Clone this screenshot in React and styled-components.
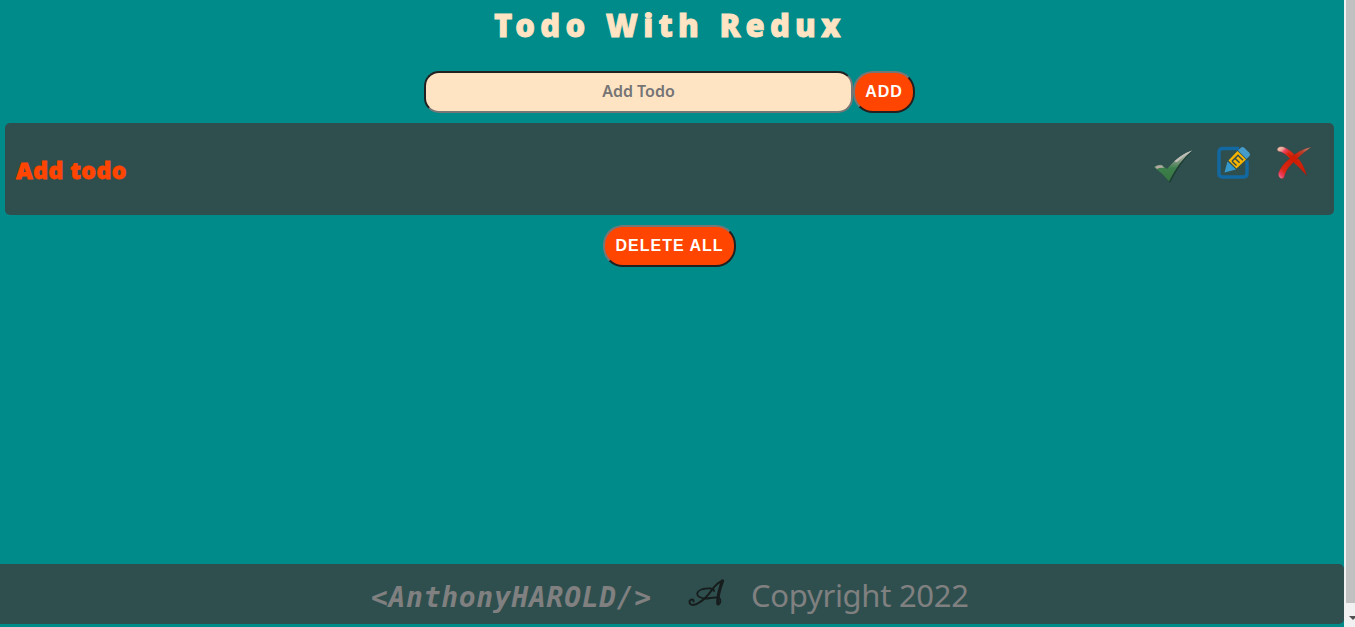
import React from 'react';
import styled, { createGlobalStyle } from 'styled-components';

const Global = createGlobalStyle`
  * { box-sizing: border-box; }
  html, body { margin: 0; height: 627px; overflow: hidden; background: #008b8b; }
`;

const Shell = styled.div`
  display: flex;
  width: 1355px;
  height: 627px;
  background: #008b8b;
  font-family: 'Noto Sans', 'Open Sans', sans-serif;
`;

const Page = styled.div`
  width: 1344px;
  height: 627px;
  display: flex;
  flex-direction: column;
  padding-bottom: 3px;
`;

const Title = styled.h1`
  margin: 0;
  height: 71px;
  padding: 3px 0 0 494px;
  color: #ffe4c4;
  font-size: 31px;
  line-height: 44px;
  font-weight: 900;
  letter-spacing: 5.2px;
  word-spacing: 2.2px;
  -webkit-text-stroke: 0.8px #ffe4c4;
  white-space: nowrap;
`;

const Form = styled.form`
  display: flex;
  height: 42px;
  margin-left: 424px;
`;

const TodoInput = styled.input`
  width: 429px;
  height: 42px;
  padding: 0 0 3px;
  border: 2px solid;
  border-color: #212121 #767676 #767676 #212121;
  border-radius: 15px;
  background: #ffe4c4;
  text-align: center;
  font: 600 16px 'Noto Sans', sans-serif;
  outline: none;
  &::placeholder { color: #757575; opacity: 1; }
`;

const PillButton = styled.button`
  width: ${(p) => p.$width}px;
  height: 42px;
  padding: 0;
  border: 2px solid;
  border-color: #767676 #212121 #212121 #767676;
  border-radius: 20px;
  background: #ff4500;
  color: #fff;
  font: 700 16px 'Liberation Sans', Arial, sans-serif;
  letter-spacing: 1px;
  white-space: nowrap;
`;

const TodoCard = styled.section`
  display: flex;
  justify-content: space-between;
  width: 1329px;
  height: 92px;
  margin: 10px 0 10px 5px;
  padding: 0 20px 0 11px;
  border-radius: 5px;
  background: #2f4f4f;
`;

const TodoText = styled.h2`
  margin: 0;
  padding-top: 31px;
  color: #ff4500;
  font-size: 23px;
  line-height: 32px;
  font-weight: 900;
  letter-spacing: 0.5px;
  -webkit-text-stroke: 0.8px #ff4500;
  white-space: nowrap;
`;

const Actions = styled.div`
  display: flex;
  gap: 20px;
  padding-top: 20px;
  svg { display: block; width: 40px; height: 40px; }
`;

const Clear = styled.div`
  display: flex;
  padding-left: 603px;
`;

const Footer = styled.footer`
  display: flex;
  height: 60px;
  margin-top: auto;
  padding-left: 371px;
  border-radius: 0 5px 5px 0;
  background: #2f4f4f;
  color: #808080;
  white-space: nowrap;
`;

const Author = styled.span`
  width: 317px;
  padding-top: 14px;
  font: italic 700 28px/40px 'DejaVu Sans Mono', monospace;
  letter-spacing: 0.7px;
`;

const Monogram = styled.svg`
  width: 38px;
  height: 30px;
  margin: 15px 25px 0 0;
`;

const Copyright = styled.span`
  padding-top: 9px;
  font: 400 31px/44px 'Noto Sans', sans-serif;
  letter-spacing: -0.3px;
`;

const ScrollTrack = styled.div`
  width: 11px;
  height: 627px;
  padding-left: 2px;
  background: #f1f1f1;
  overflow: hidden;
  svg { display: block; margin: 13px 0 0 3px; }
`;

const ScrollThumb = styled.div`
  height: 603px;
  background: #c1c1c1;
`;

function CheckIcon() {
  return (
    <svg viewBox="0 0 40 40">
      <defs>
        <linearGradient id="check" gradientUnits="userSpaceOnUse" x1="0" y1="8" x2="0" y2="39">
          <stop offset="0" stopColor="#c9cec7" />
          <stop offset="0.3" stopColor="#879a87" />
          <stop offset="0.55" stopColor="#3d7f4c" />
          <stop offset="1" stopColor="#35743f" />
        </linearGradient>
      </defs>
      <path d="M2 25Q5 22 9 23L14 27Q25 13 38 8.500Q26 20 16 40Q9 31 2 25Z" fill="#1d3d33" />
      <path d="M0 24Q4 21 8 22L13 26Q25 12 38 7.500Q25 18 15 38.500Q8 30 0 24Z" fill="url(#check)" />
      <path d="M20 18.500Q28 11 38 7.500Q29 13 23 19" fill="#c2bfb8" />
      <path d="M1 24Q4 21.500 8 22.500L10 25Q6 24 3 26Z" fill="#b6a7a4" />
    </svg>
  );
}

function EditIcon() {
  return (
    <svg viewBox="0 0 40 40">
      <path d="M25 5.500H8.500Q5 5.500 5 9V30.500Q5 34 8.500 34H29.500Q33 34 33 30.500V17.500" fill="none" stroke="#1269a2" strokeWidth="3.400" />
      <path d="M13.500 18.500L10.500 29.500L22 26.500Z" fill="#3599cb" />
      <path d="M14.500 17.500L23.500 8L32 16.500L22.500 25.500Z" fill="#f7b500" />
      <path d="M24 7.500L27 4.500Q28.500 3.500 30 4.500L35.500 10Q36.500 11.500 35.500 13L32.500 16Z" fill="#459bc9" />
      <path d="M18 18.200L24 12.200L29 17.200M21 15.200L25.500 19.700M18 18.200L22.500 22.500" fill="none" stroke="#344d4c" strokeWidth="1.500" />
    </svg>
  );
}

function DeleteIcon() {
  return (
    <svg viewBox="0 0 40 40">
      <defs>
        <linearGradient id="stroke-down" x1="0" y1="0" x2="1" y2="1">
          <stop offset="0" stopColor="#f4d0be" />
          <stop offset="0.13" stopColor="#eca79a" />
          <stop offset="0.2" stopColor="#ed405f" />
          <stop offset="0.3" stopColor="#d92b14" />
          <stop offset="1" stopColor="#c91902" />
        </linearGradient>
        <linearGradient id="stroke-up" x1="1" y1="0" x2="0" y2="1">
          <stop offset="0" stopColor="#d8a48a" />
          <stop offset="0.2" stopColor="#b9422f" />
          <stop offset="0.4" stopColor="#cf1b02" />
          <stop offset="0.78" stopColor="#d92613" />
          <stop offset="0.9" stopColor="#ee3e63" />
          <stop offset="1" stopColor="#f0bbb1" />
        </linearGradient>
      </defs>
      <path d="M3 6Q5 2.500 10 4Q17 7 23 14Q30 21 33 33Q26 25 18 18Q12 11 7 9Q3 9 3 6Z" fill="url(#stroke-down)" stroke="#493d38" strokeWidth="0.500" />
      <path d="M4 31Q7 22 15 16Q25 6 37.500 4Q26 12 18 21Q12 26 10 35Q7 37 5 34Z" fill="url(#stroke-up)" stroke="#493d38" strokeWidth="0.500" />
      <path d="M13 10Q22 15 26 22L18 18Z" fill="#d11c02" />
    </svg>
  );
}

export default function App() {
  return (
    <>
      <Global />
      <Shell>
        <Page>
          <Title>Todo With Redux</Title>
          <Form onSubmit={(e) => e.preventDefault()}>
            <TodoInput placeholder="Add Todo" />
            <PillButton $width={62}>ADD</PillButton>
          </Form>
          <TodoCard>
            <TodoText>Add todo</TodoText>
            <Actions>
              <CheckIcon />
              <EditIcon />
              <DeleteIcon />
            </Actions>
          </TodoCard>
          <Clear>
            <PillButton $width={133}>DELETE ALL</PillButton>
          </Clear>
          <Footer>
            <Author>{'<AnthonyHAROLD/>'}</Author>
            <Monogram viewBox="0 0 38 30" fill="none" stroke="#171d1d" strokeLinecap="round">
              <path d="M34.500 2C25 4 23 17 12 23C7 27 1 27 1.500 22C3 20 6 20 5.500 22.500" strokeWidth="2" />
              <path d="M34.500 2C32 9 29 20 30 25" strokeWidth="3.200" />
              <path d="M30 25C33 25 33 20 31 19C25 17 20 21 14 19C7 17 8 12 15 10C20 9 26 9 26 12" strokeWidth="1.800" />
            </Monogram>
            <Copyright>Copyright 2022</Copyright>
          </Footer>
        </Page>
        <ScrollTrack>
          <ScrollThumb />
          <svg width="8" height="5" viewBox="0 0 8 5"><path d="M0 0H8L4 4Z" fill="#505050" /></svg>
        </ScrollTrack>
      </Shell>
    </>
  );
}
